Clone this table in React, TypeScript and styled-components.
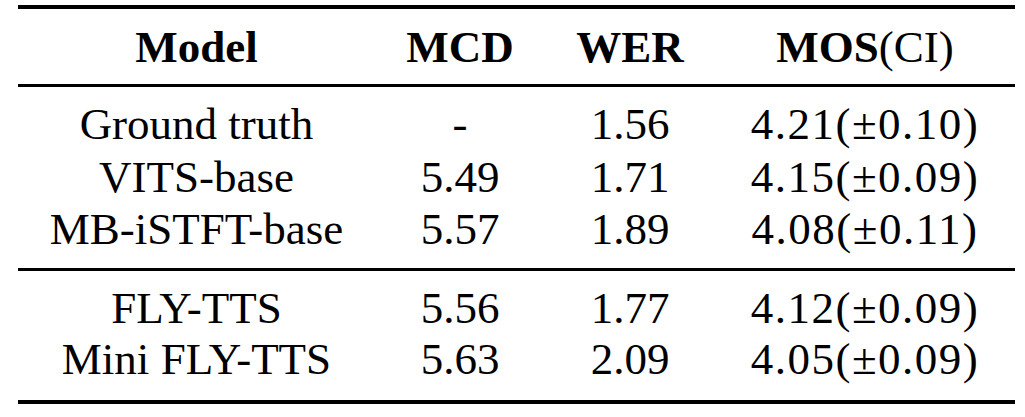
import React from "react"
import styled, { createGlobalStyle } from "styled-components"

const GlobalStyle = createGlobalStyle`
    html, body {
        margin: 0;
        padding: 0;
        background: #FFF;
    }
    body {
        font-family: "Liberation Serif", "Times New Roman", serif;
        color: #000;
    }
`

const TableContainer = styled.div`
    width: 997px;
    margin-left: 18px;
    padding-top: 5px;
`
const Rule = styled.div<{ $thick: number }>`
    height: ${p => p.$thick}px;
    background: #000;
`
const Section = styled.div<{ $top: number; $bottom: number; $row: number }>`
    display: grid;
    grid-template-columns: 357px 170px 170px 300px;
    grid-auto-rows: ${p => p.$row}px;
    padding: ${p => p.$top}px 0 ${p => p.$bottom}px;
    font-size: 45px;
    line-height: ${p => p.$row}px;
`
const Cell = styled.div<{ $spaced?: boolean }>`
    text-align: center;
    white-space: nowrap;
    letter-spacing: ${p => (p.$spaced ? "1.5px" : "normal")};
`
const HeadCell = styled(Cell)`
    font-weight: 700;
`
const Plain = styled.span`
    font-weight: 400;
`

type Row = [string, string, string, string]

const groupOne: Row[] = [
    ["Ground truth", "-", "1.56", "4.21(±0.10)"],
    ["VITS-base", "5.49", "1.71", "4.15(±0.09)"],
    ["MB-iSTFT-base", "5.57", "1.89", "4.08(±0.11)"],
]
const groupTwo: Row[] = [
    ["FLY-TTS", "5.56", "1.77", "4.12(±0.09)"],
    ["Mini FLY-TTS", "5.63", "2.09", "4.05(±0.09)"],
]

const Rows: React.FC<{ rows: Row[] }> = ({ rows }) => (
    <>
        {rows.map(r =>
            r.map((v, i) => (
                <Cell key={r[0] + i} $spaced={i === 3}>
                    {v}
                </Cell>
            ))
        )}
    </>
)

export default function App() {
    return (
        <>
            <GlobalStyle />
            <TableContainer>
                <Rule $thick={4} />
                <Section $top={12} $bottom={11} $row={52}>
                    <HeadCell>Model</HeadCell>
                    <HeadCell>MCD</HeadCell>
                    <HeadCell>WER</HeadCell>
                    <HeadCell>MOS<Plain>(CI)</Plain></HeadCell>
                </Section>
                <Rule $thick={3} />
                <Section $top={11} $bottom={12} $row={52.5}>
                    <Rows rows={groupOne} />
                </Section>
                <Rule $thick={3} />
                <Section $top={12} $bottom={14} $row={51.5}>
                    <Rows rows={groupTwo} />
                </Section>
                <Rule $thick={4} />
            </TableContainer>
        </>
    )
}
